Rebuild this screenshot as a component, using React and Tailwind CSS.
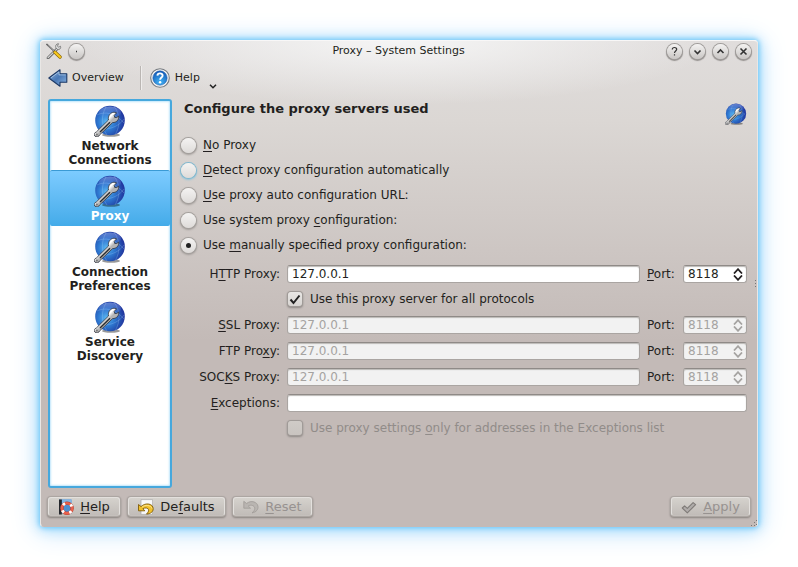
import React from "react";

const underline = "underline decoration-1 underline-offset-2";

function Key({ children }) {
  return <span className={underline}>{children}</span>;
}

function Globe({ className = "" }) {
  return (
    <svg viewBox="0 0 32 32" className={className} aria-hidden="true">
      <defs>
        <radialGradient id="globeSea" cx="0.38" cy="0.55" r="0.6">
          <stop offset="0" stopColor="#5cb8f2" />
          <stop offset="0.45" stopColor="#2f7bd2" />
          <stop offset="0.8" stopColor="#2450b0" />
          <stop offset="1" stopColor="#2238a0" />
        </radialGradient>
        <linearGradient id="globeShine" x1="0" y1="0" x2="0" y2="1">
          <stop offset="0" stopColor="#a9bdf5" stopOpacity="0.5" />
          <stop offset="1" stopColor="#4d7fe0" stopOpacity="0" />
        </linearGradient>
        <linearGradient id="wrenchSteel" gradientUnits="userSpaceOnUse" x1="9" y1="17" x2="14" y2="22">
          <stop offset="0.2" stopColor="#ffffff" />
          <stop offset="0.7" stopColor="#b4b4b4" />
        </linearGradient>
      </defs>
      <ellipse cx="17" cy="30" rx="9" ry="1.8" fill="#000" opacity="0.4" />
      <circle cx="16" cy="15.5" r="14.8" fill="url(#globeSea)" />
      <ellipse cx="16" cy="8" rx="11" ry="6.5" fill="url(#globeShine)" />
      <g fill="none" stroke="#b5dcff" strokeWidth="0.6" opacity="0.4">
        <path d="M3 10C10 6 22 8 30 18M5 24C12 25 24 23 30 14M12 2C7 10 7 22 13 30M20 1c6 8 7 19 1 29" />
      </g>
      <path
        d="M.8 31C-.4 29.500.3 27.600 2.300 27L14.500 15C13.800 11 16 7.700 20 7.200L22.600 7.800 20.200 10.400 20.800 12.600 23.400 12.200 24.600 10.800C25.400 14.500 22.500 17.700 18.600 17.600L5.600 29.900C5 31.800 2.300 32.600.8 31z"
        fill="url(#wrenchSteel)"
        stroke="#30343c"
        strokeWidth="0.8"
      />
      <path d="M6 27L16 17.200" stroke="#2b2b2b" strokeWidth="1.300" />
      <circle cx="2.900" cy="29.500" r="1" fill="#777" />
    </svg>
  );
}

function ToolsIcon() {
  return (
    <svg viewBox="0 0 16 16" className="size-4" aria-hidden="true">
      <path d="M2 15L11 6" stroke="#555" strokeWidth="2.600" strokeLinecap="round" />
      <path d="M2 14.800L11 6" stroke="#d5d5d5" strokeWidth="1.200" strokeLinecap="round" />
      <path d="M14.500 3.200L12.500 4.300 11.500 3l1-2.300C10.200.7 9 2.700 9.900 4.800l1.500 1.500c2 .8 4-.7 3.100-3.100z" fill="#ddd" stroke="#666" strokeWidth="0.700" />
      <path d="M1 1.500L8 8" stroke="#555" strokeWidth="1.700" strokeLinecap="round" />
      <path d="M1.500 2L8 8" stroke="#ccc" strokeWidth="0.600" />
      <path d="M9 9.200l5 4.800" stroke="#8a6500" strokeWidth="3.400" strokeLinecap="round" />
      <path d="M9 9.200l5 4.800" stroke="#f7c81c" strokeWidth="2.200" strokeLinecap="round" />
    </svg>
  );
}

function BackIcon() {
  return (
    <svg viewBox="0 0 20 18" className="h-[18px] w-5" aria-hidden="true">
      <defs>
        <linearGradient id="backFill" x1="0" y1="0" x2="1" y2="1">
          <stop offset="0" stopColor="#8fb4dc" />
          <stop offset="0.500" stopColor="#4a78b5" />
          <stop offset="1" stopColor="#8db6e2" />
        </linearGradient>
      </defs>
      <path d="M.8 9L12 .8V4.800h6.800v8.400H12v4z" fill="url(#backFill)" stroke="#1d3966" strokeWidth="1.100" strokeLinejoin="round" />
      <path d="M3 8.800L11 2.900v3h6.700" fill="none" stroke="#bcd4ee" strokeWidth="0.700" />
    </svg>
  );
}

function HelpIcon() {
  return (
    <svg viewBox="0 0 20 20" className="size-5" aria-hidden="true">
      <defs>
        <radialGradient id="helpBlue" cx="0.500" cy="0.800" r="0.800">
          <stop offset="0" stopColor="#43b4f5" />
          <stop offset="1" stopColor="#1257b5" />
        </radialGradient>
      </defs>
      <circle cx="10" cy="10" r="9.300" fill="#f5f5f5" stroke="#777b80" strokeWidth="1.100" />
      <circle cx="10" cy="10" r="7.200" fill="url(#helpBlue)" stroke="#1956a6" strokeWidth="0.500" />
      <path d="M7.400 7.600C7.600 4.600 12.800 4.700 12.600 7.800 12.500 9.500 10.200 9.700 10.100 11.700" fill="none" stroke="#fff" strokeWidth="1.900" />
      <circle cx="10.100" cy="14.200" r="1.200" fill="#fff" />
    </svg>
  );
}

function ManualIcon() {
  return (
    <svg viewBox="0 0 16 16" className="size-4" aria-hidden="true">
      <path d="M1 .5h12.500v14H1z" fill="#4d8fd0" />
      <path d="M4 .5h9.500v4H4z" fill="#82b5e4" />
      <path d="M1 .5h2.800v15H1z" fill="#24272c" />
      <circle cx="9" cy="9.300" r="5.100" fill="#4d8fd0" stroke="#a83a2e" strokeWidth="3.300" />
      <circle cx="9" cy="9.300" r="5.100" fill="none" stroke="#e8604c" strokeWidth="2.600" />
      <circle cx="9" cy="9.300" r="5.100" fill="none" stroke="#fff" strokeWidth="2.800" strokeDasharray="2.400 5.610" strokeDashoffset="-3" />
    </svg>
  );
}

function UndoIcon({ muted }) {
  return (
    <svg viewBox="0 0 16 16" className="size-4" aria-hidden="true">
      {!muted && <path d="M3 .6h11.500v14.800H3z" fill="#f8f8f8" stroke="#aaa" strokeWidth="0.700" />}
      {muted ? (
        <path
          d="M.8 2.300v6.900h6.700L5.300 7c2.400-1.700 6.300-.6 6.400 2.300.1 1.700-.8 3-2.700 4.600 4.500-.9 6.300-3.400 6-6.400C14.500 2.900 8 .8 3.600 4.500z"
          fill="#b9b5b1"
          stroke="#9f9b97"
          strokeWidth="0.800"
        />
      ) : (
        <path
          d="M.5 5.500v6.300h6.300L4.900 9.700c2-1.300 5.300-.9 5.700 1.100.2 1.500-.6 2.800-2.100 4.300 4-.2 6.700-2.300 6.700-5.300C15.200 4.500 7.500 3.200 3 7.600z"
          fill="#f0c02b"
          stroke="#805c08"
          strokeWidth="0.900"
          strokeLinejoin="round"
        />
      )}
      {!muted && <path d="M4 8.200C7 5.500 13 6 14 9.500" fill="none" stroke="#ffe99a" strokeWidth="0.900" />}
    </svg>
  );
}

function CheckIcon() {
  return (
    <svg viewBox="0 0 16 16" className="size-4" aria-hidden="true">
      <path d="M1.300 9l2.300-2.200 2.700 2.500 5.800-5.700 2.500 2.100-8.300 8.200z" fill="#b0acaa" stroke="#7f7b78" strokeWidth="1.100" strokeLinejoin="round" />
    </svg>
  );
}

const glyphs = {
  help: <path d="M5.300 5.500C5.300 2.900 9.700 2.900 9.700 5.300 9.700 7 7.500 7 7.500 9M7.500 10.200v1.400" />,
  down: <path d="M4.500 6.500l3 3 3-3" />,
  up: <path d="M4.500 9l3-3 3 3" />,
  close: <path d="M4.500 4.500l6 6m0-6l-6 6" />,
  dot: <path d="M7 7.500h1" />,
};

function TitleButton({ kind, label }) {
  return (
    <button
      type="button"
      aria-label={label}
      className="flex size-[15px] shrink-0 items-center justify-center rounded-full bg-linear-to-b from-[#f4f3f2] to-[#c9c6c4] shadow-[0_0_0_1px_#a09d9b,0_1px_1px_1px_#95918f]"
    >
      <svg viewBox="0 0 15 15" className="size-[15px]" fill="none" stroke="#333" strokeWidth={kind === "help" ? 1.2 : 1.6}>
        {glyphs[kind]}
      </svg>
    </button>
  );
}

const modules = [
  { lines: ["Network", "Connections"] },
  { lines: ["Proxy"], active: true },
  { lines: ["Connection", "Preferences"] },
  { lines: ["Service", "Discovery"] },
];

function Sidebar() {
  return (
    <nav className="flex w-[124px] shrink-0 flex-col rounded-[3px] border-2 border-[#46a8dd] bg-white shadow-[inset_0_0_2px_1px_#bfe6fb]">
      {modules.map(({ lines, active }) => (
        <a
          key={lines.join(" ")}
          href="#"
          aria-current={active ? "page" : undefined}
          className={
            "flex flex-col items-center pb-[3px] text-center text-[12px] leading-[14px] font-bold first:pt-1 " +
            (active
              ? "rounded-[2px] border-t border-[#3a9ad5] bg-linear-to-b from-[#7ccbff] to-[#43abe9] pt-1 text-white"
              : "pt-[5px]")
          }
        >
          <Globe className="mb-0.5 size-8" />
          {lines.map((line) => (
            <span key={line}>{line}</span>
          ))}
        </a>
      ))}
    </nav>
  );
}

const modes = [
  { id: "none", label: <><Key>N</Key>o Proxy</> },
  { id: "detect", label: <><Key>D</Key>etect proxy configuration automatically</>, hot: true },
  { id: "auto", label: <><Key>U</Key>se proxy auto configuration URL:</> },
  { id: "system", label: <>Use system proxy <Key>c</Key>onfiguration:</> },
  { id: "manual", label: <>Use <Key>m</Key>anually specified proxy configuration:</> },
];

function ModeRadio({ id, label, hot }) {
  return (
    <label className="flex h-[25px] items-center gap-[7px]">
      <input
        type="radio"
        name="mode"
        defaultChecked={id === "manual"}
        className={
          "mt-0.5 ml-px flex size-[15px] shrink-0 appearance-none items-center justify-center rounded-full bg-linear-to-b from-[#f4f3f2] to-[#dedbd9] checked:before:size-[5px] checked:before:rounded-full checked:before:bg-[#222] " +
          (hot
            ? "shadow-[0_0_0_1px_#82b8ce,0_1px_2px_1px_#8cc3da]"
            : "shadow-[0_0_0_1px_#a5a19e,0_1px_2px_1px_#a09b98]")
        }
      />
      <span>{label}</span>
    </label>
  );
}

const field =
  "h-[18px] w-full min-w-0 rounded-[3px] border border-[#aaa5a2] border-t-[#8f8a87] bg-white shadow-[inset_0_1px_1px_#bbb8b5] disabled:bg-[#f2f2f2] disabled:text-[#a5a3a1]";

function Port({ id, disabled }) {
  return (
    <div
      className={
        "flex h-[18px] items-center rounded-[3px] border border-[#aaa5a2] border-t-[#8f8a87] pr-[3px] pl-1 shadow-[inset_0_1px_1px_#bbb8b5] " +
        (disabled ? "bg-[#f2f2f2] text-[#a5a3a1]" : "bg-white")
      }
    >
      <input id={id} inputMode="numeric" defaultValue="8118" disabled={disabled} className="w-full min-w-0 bg-transparent" />
      <div className="flex shrink-0 flex-col gap-px">
        {["Increase", "Decrease"].map((name) => (
          <button key={name} type="button" aria-label={name + " port"} disabled={disabled} className="block">
            <svg viewBox="0 0 10 6" className="h-[6px] w-[10px]" fill="none" stroke="currentColor" strokeWidth="1.800">
              <path d={name === "Increase" ? "M1 5.500l4-4.300 4 4.300" : "M1 .500l4 4.300L9 .500"} />
            </svg>
          </button>
        ))}
      </div>
    </div>
  );
}

function ProxyRow({ id, label, portLabel = "Port:", disabled }) {
  return (
    <>
      <label htmlFor={id} className="text-right">{label}</label>
      <input id={id} type="text" defaultValue="127.0.0.1" disabled={disabled} className={field + " px-1"} />
      <label htmlFor={id + "-port"}>{portLabel}</label>
      <Port id={id + "-port"} disabled={disabled} />
    </>
  );
}

function Tick({ label, disabled, checked }) {
  return (
    <label className={"col-span-3 col-start-2 flex h-[17px] items-start gap-[7px] " + (disabled ? "text-[#918c89]" : "")}>
      <span className="mt-px grid shrink-0">
        <input
          type="checkbox"
          defaultChecked={checked}
          disabled={disabled}
          className="peer col-start-1 row-start-1 mx-px size-[14px] appearance-none rounded-[3px] bg-linear-to-b from-[#e9e7e5] to-[#d8d5d2] shadow-[0_0_0_1px_#a09b98,0_1px_2px_1px_#8f8a87] disabled:from-[#cfcbc7] disabled:to-[#c9c4c0]"
        />
        <svg viewBox="0 0 16 14" className="pointer-events-none invisible col-start-1 row-start-1 h-[14px] w-4 peer-checked:visible" fill="none" stroke="#222" strokeWidth="2">
          <path d="M3.500 7.500l3 3.500 6-7.500" />
        </svg>
      </span>
      <span>{label}</span>
    </label>
  );
}

function FooterButton({ icon, children, disabled, className }) {
  return (
    <button
      type="button"
      disabled={disabled}
      className={
        "flex h-[19px] items-center justify-center gap-1.5 rounded-[3px] border border-[#e3e0dd] border-b-[#c5c0bc] bg-linear-to-b from-[#d5d2cd] to-[#c1bcb8] text-[13px] shadow-[0_0_0_1px_#aca6a2,0_1px_2px_1px_#8a8480] disabled:text-[#979290] " +
        className
      }
    >
      {icon}
      <span>{children}</span>
    </button>
  );
}

export default function App() {
  return (
    <div className="flex min-h-screen bg-white p-10 font-['DejaVu_Sans',sans-serif] text-[12px] leading-[16px] text-[#231f20]">
      <div className="flex min-w-0 flex-1 flex-col rounded-[4px] border border-[#e9e7e5] border-t-[#f8f7f7] border-b-[#c4bab7] bg-[radial-gradient(ellipse_320px_64px_at_50%_0,#f5f5f5,transparent),linear-gradient(#e0dddc,#dbd7d4_80px,#c3bab7_300px)] shadow-[0_0_5px_1px_#70c8f8,0_1px_14px_1px_#9edafd,0_3px_28px_2px_#c9e5fb]">
        <header className="flex h-5 items-center gap-[9px] pr-1.5 pl-[5px]">
          <div className="flex flex-1 items-center gap-[7px]">
            <ToolsIcon />
            <TitleButton kind="dot" label="Window menu" />
          </div>
          <h1 className="text-[11px]">Proxy – System Settings</h1>
          <div className="flex flex-1 items-center justify-end gap-2">
            <TitleButton kind="help" label="Help" />
            <TitleButton kind="down" label="Minimize" />
            <TitleButton kind="up" label="Maximize" />
            <TitleButton kind="close" label="Close" />
          </div>
        </header>

        <div className="flex h-[34px] items-center pl-[7px] text-[11px]">
          <button type="button" className="flex items-center gap-1">
            <BackIcon />
            Overview
          </button>
          <div className="mr-2 ml-4 h-6 w-0.5 border-r border-l border-r-[#efedec] border-l-[#bab6b3]" />
          <button type="button" className="flex items-center gap-[5px]">
            <HelpIcon />
            Help
            <svg viewBox="0 0 8 5" className="mt-4 ml-1 h-[5px] w-2" fill="none" stroke="#222" strokeWidth="1.500">
              <path d="M1 .7l3 3 3-3" />
            </svg>
          </button>
        </div>

        <main className="mt-1 flex flex-1 gap-2 pl-[7px]">
          <Sidebar />
          <section className="min-w-0 flex-1">
            <div className="flex h-[33px] items-start justify-between pl-1">
              <h2 className="mt-0.5 text-[13px] font-bold">Configure the proxy servers used</h2>
              <Globe className="mt-1 size-[22px]" />
            </div>
            <div className="flex flex-col items-start">
              {modes.map((mode) => (
                <ModeRadio key={mode.id} {...mode} />
              ))}
            </div>
            <div className="mt-2 grid grid-cols-[100px_1fr_29px_64px] items-center gap-x-[7px] gap-y-2">
              <ProxyRow id="http" label={<>H<Key>T</Key>TP Proxy:</>} portLabel={<><Key>P</Key>ort:</>} />
              <Tick checked label="Use this proxy server for all protocols" />
              <ProxyRow id="ssl" label={<><Key>S</Key>SL Proxy:</>} disabled />
              <ProxyRow id="ftp" label={<>FTP Pro<Key>x</Key>y:</>} disabled />
              <ProxyRow id="socks" label={<>SOC<Key>K</Key>S Proxy:</>} disabled />
              <label htmlFor="exceptions" className="text-right"><Key>E</Key>xceptions:</label>
              <input id="exceptions" type="text" className={field + " col-span-3 px-1"} />
              <Tick disabled label={<>Use proxy settings <Key>o</Key>nly for addresses in the Exceptions list</>} />
            </div>
          </section>
          <svg viewBox="0 0 2 8" className="mb-5 h-2 w-0.5 shrink-0 self-center" fill="#777" aria-hidden="true">
            <path d="M0 0h1v1H0zM0 3h1v1H0zM0 6h1v1H0z" />
          </svg>
        </main>

        <footer className="flex gap-2 pt-[9px] pl-[7px]">
          <FooterButton icon={<ManualIcon />} className="w-[72px]"><Key>H</Key>elp</FooterButton>
          <FooterButton icon={<UndoIcon />} className="w-[97px]">De<Key>f</Key>aults</FooterButton>
          <FooterButton icon={<UndoIcon muted />} disabled className="w-[79px]"><Key>R</Key>eset</FooterButton>
          <FooterButton icon={<CheckIcon />} disabled className="mr-[7px] ml-auto w-[79px]"><Key>A</Key>pply</FooterButton>
        </footer>
        <svg viewBox="0 0 6 6" className="mt-1 size-1.5 self-end" fill="#777" aria-hidden="true">
          <path d="M0 5h1v1H0zM3 5h1v1H3zM3 2h1v1H3zM5 0h1v1H5zM5 4h1v1H5z" />
        </svg>
      </div>
    </div>
  );
}
